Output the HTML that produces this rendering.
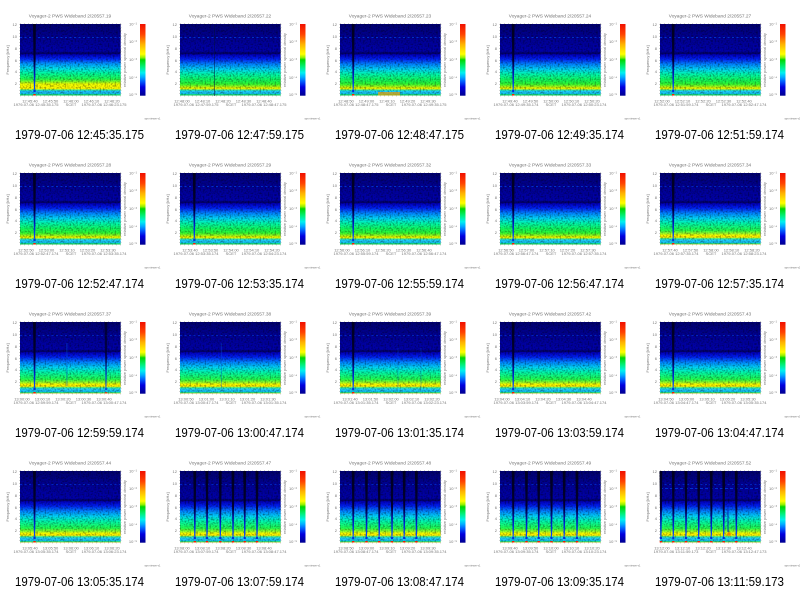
<!DOCTYPE html>
<html><head><meta charset="utf-8"><title>Voyager-2 PWS Wideband</title>
<style>
html,body{margin:0;padding:0;background:#fff;width:800px;height:596px;overflow:hidden}
svg{display:block}
text{font-family:"Liberation Sans",sans-serif}
.h{font-size:4.8px;fill:#777;text-anchor:middle}
.t{font-size:4px;fill:#777;text-anchor:middle}
.b{font-size:13px;fill:#000}
</style></head><body>
<svg width="800" height="596" viewBox="0 0 800 596" xmlns="http://www.w3.org/2000/svg">
<defs>
<filter id="n" x="0" y="0" width="100%" height="100%"><feTurbulence type="fractalNoise" baseFrequency="0.6" numOctaves="1" seed="4"/><feColorMatrix values="0 0 0 0 0  0 0 0 0 0  0 0 0 0 0  1.2 0 0 0 -0.52"/></filter>
<linearGradient id="A" x1="0" y1="0" x2="0" y2="1"><stop offset="0" stop-color="#000070"/><stop offset=".16" stop-color="#000090"/><stop offset=".38" stop-color="#0000a8"/><stop offset=".41" stop-color="#000060"/><stop offset=".43" stop-color="#0000c0"/><stop offset=".49" stop-color="#0020f0"/><stop offset=".56" stop-color="#0080ff"/><stop offset=".63" stop-color="#00d0f8"/><stop offset=".7" stop-color="#00f8b0"/><stop offset=".78" stop-color="#10f860"/><stop offset=".84" stop-color="#30f830"/><stop offset=".87" stop-color="#90f820"/><stop offset=".89" stop-color="#d8f800"/><stop offset=".905" stop-color="#f0f800"/><stop offset=".925" stop-color="#30f0a0"/><stop offset=".94" stop-color="#20d0ff"/><stop offset=".975" stop-color="#10c0f0"/><stop offset=".985" stop-color="#10e080"/><stop offset="1" stop-color="#10d050"/></linearGradient>
<linearGradient id="B" x1="0" y1="0" x2="0" y2="1"><stop offset="0" stop-color="#000070"/><stop offset=".16" stop-color="#000090"/><stop offset=".38" stop-color="#0000a8"/><stop offset=".41" stop-color="#000060"/><stop offset=".43" stop-color="#0000c0"/><stop offset=".49" stop-color="#0028f8"/><stop offset=".55" stop-color="#0090ff"/><stop offset=".62" stop-color="#00e0f0"/><stop offset=".69" stop-color="#00fca0"/><stop offset=".77" stop-color="#20fc50"/><stop offset=".81" stop-color="#90fc20"/><stop offset=".84" stop-color="#f0fc00"/><stop offset=".905" stop-color="#fff800"/><stop offset=".925" stop-color="#30f0a0"/><stop offset=".94" stop-color="#20c0ff"/><stop offset=".975" stop-color="#10c0f0"/><stop offset=".985" stop-color="#10e080"/><stop offset="1" stop-color="#10d050"/></linearGradient>
<linearGradient id="C" x1="0" y1="0" x2="0" y2="1"><stop offset="0" stop-color="#000070"/><stop offset=".16" stop-color="#000090"/><stop offset=".38" stop-color="#0000a8"/><stop offset=".41" stop-color="#000060"/><stop offset=".43" stop-color="#0000c0"/><stop offset=".49" stop-color="#0020f0"/><stop offset=".56" stop-color="#0080ff"/><stop offset=".63" stop-color="#00d0f8"/><stop offset=".7" stop-color="#00f8b0"/><stop offset=".8" stop-color="#20fc50"/><stop offset=".85" stop-color="#a8fc20"/><stop offset=".87" stop-color="#f8fc00"/><stop offset=".9" stop-color="#fff000"/><stop offset=".92" stop-color="#30f0a0"/><stop offset=".94" stop-color="#20d0ff"/><stop offset=".975" stop-color="#10c0f0"/><stop offset=".985" stop-color="#10e080"/><stop offset="1" stop-color="#d8d020"/></linearGradient>
<linearGradient id="lg" x1="0" y1="0" x2="0" y2="1"><stop offset="0" stop-color="#000020"/><stop offset=".55" stop-color="#000030"/><stop offset=".72" stop-color="#0010b0"/><stop offset=".9" stop-color="#0040f0"/><stop offset="1" stop-color="#0050ff"/></linearGradient>
<linearGradient id="cb" x1="0" y1="0" x2="0" y2="1"><stop offset="0" stop-color="#f01000"/><stop offset=".14" stop-color="#ff4000"/><stop offset=".2" stop-color="#ff7000"/><stop offset=".28" stop-color="#ffb000"/><stop offset=".36" stop-color="#ffe000"/><stop offset=".42" stop-color="#ffff00"/><stop offset=".47" stop-color="#90f000"/><stop offset=".5" stop-color="#00d800"/><stop offset=".6" stop-color="#00f080"/><stop offset=".68" stop-color="#00f0f0"/><stop offset=".74" stop-color="#00b0ff"/><stop offset=".8" stop-color="#0060ff"/><stop offset=".88" stop-color="#0000e0"/><stop offset="1" stop-color="#000090"/></linearGradient>
<g id="noise"><rect x="0" y="0" width="100.7" height="71.5" filter="url(#n)"/></g>
<g id="pA"><rect width="100.7" height="71.5" fill="url(#A)"/><use href="#noise"/><path d="M0 13.5H100.7" stroke="#0040e0" stroke-width=".8" stroke-dasharray="2 2.5"/></g>
<g id="pB"><rect width="100.7" height="71.5" fill="url(#B)"/><use href="#noise"/><path d="M0 13.5H100.7" stroke="#0040e0" stroke-width=".8" stroke-dasharray="2 2.5"/></g>
<g id="pC"><rect width="100.7" height="71.5" fill="url(#C)"/><use href="#noise"/><path d="M0 13.5H100.7" stroke="#0030d0" stroke-width=".8" stroke-dasharray="2 2.5"/></g>
<g id="L"><path d="M-1.5 0H1.4L1 38L.7 62L.3 67H-.6L-.9 38Z" fill="url(#lg)"/><rect x="-1.1" y="66" width="2.2" height="2" fill="#0030e0"/><rect x="-1.2" y="70" width="2.4" height="1.5" fill="#f02000"/></g>
<g id="f"><path d="M20 23.5H121M20 96H121" stroke="#aaa" stroke-width=".7" stroke-dasharray=".7 3.3"/><path d="M19.5 24V96M121 24V96" stroke="#aaa" stroke-width=".7" stroke-dasharray=".7 2.3"/>
<rect x="140" y="24" width="5.5" height="71.7" fill="url(#cb)"/>
<text class="t" style="text-anchor:end" x="17" y="26">12</text><text class="t" style="text-anchor:end" x="17" y="38">10</text><text class="t" style="text-anchor:end" x="17" y="50">8</text><text class="t" style="text-anchor:end" x="17" y="62">6</text><text class="t" style="text-anchor:end" x="17" y="73">4</text><text class="t" style="text-anchor:end" x="17" y="85">2</text>
<text class="t" transform="translate(9 60) rotate(-90)">Frequency [kHz]</text>
<text class="t" transform="translate(126 60) rotate(-90)">relative power spectral density</text>
<text class="t" x="133" y="25.5">10⁻¹</text><text class="t" x="133" y="43">10⁻²</text><text class="t" x="133" y="61">10⁻³</text><text class="t" x="133" y="79">10⁻⁴</text><text class="t" x="133" y="96">10⁻⁵</text>
<text x="152.5" y="119.5" style="font-size:2.6px;fill:#777;text-anchor:middle">sps-viewer-v1</text></g>
</defs>
<rect width="800" height="596" fill="#fff"/>

<g>
<use href="#pB" x="20" y="24"/><use href="#L" x="34.5" y="24"/><use href="#f"/>
<text class="h" x="70" y="17.5">Voyager-2 PWS Wideband 2/20557.19</text>
<text class="t" y="102.3"><tspan x="30">12:45:40</tspan><tspan x="50.5">12:45:50</tspan><tspan x="71">12:46:00</tspan><tspan x="91.5">12:46:10</tspan><tspan x="112">12:46:20</tspan></text>
<text class="t" y="106"><tspan x="36">1979-07-06 12:45:35.175</tspan><tspan x="71">SCET</tspan><tspan x="104">1979-07-06 12:46:23.175</tspan></text>
<text class="b" x="15" y="139" textLength="129" lengthAdjust="spacingAndGlyphs">1979-07-06 12:45:35.175</text>
</g>
<g transform="translate(160 0)">
<use href="#pA" x="20" y="24"/><path d="M54.7 24V96" stroke="#001040" stroke-width=".5"/><use href="#f"/>
<text class="h" x="70" y="17.5">Voyager-2 PWS Wideband 2/20557.22</text>
<text class="t" y="102.3"><tspan x="22">12:48:00</tspan><tspan x="42.5">12:48:10</tspan><tspan x="63">12:48:20</tspan><tspan x="83.5">12:48:30</tspan><tspan x="104">12:48:40</tspan></text>
<text class="t" y="106"><tspan x="36">1979-07-06 12:47:59.175</tspan><tspan x="71">SCET</tspan><tspan x="104">1979-07-06 12:48:47.175</tspan></text>
<text class="b" x="15" y="139" textLength="129" lengthAdjust="spacingAndGlyphs">1979-07-06 12:47:59.175</text>
</g>
<g transform="translate(320 0)">
<use href="#pA" x="20" y="24"/><use href="#L" x="33.2" y="24"/><rect x="58" y="92" width="22" height="3.5" fill="#f0a000" opacity=".7"/><use href="#f"/>
<text class="h" x="70" y="17.5">Voyager-2 PWS Wideband 2/20557.23</text>
<text class="t" y="102.3"><tspan x="26">12:48:50</tspan><tspan x="46.5">12:49:00</tspan><tspan x="67">12:49:10</tspan><tspan x="87.5">12:49:20</tspan><tspan x="108">12:49:30</tspan></text>
<text class="t" y="106"><tspan x="36">1979-07-06 12:48:47.175</tspan><tspan x="71">SCET</tspan><tspan x="104">1979-07-06 12:49:35.175</tspan></text>
<text class="b" x="15" y="139" textLength="129" lengthAdjust="spacingAndGlyphs">1979-07-06 12:48:47.175</text>
</g>
<g transform="translate(480 0)">
<use href="#pA" x="20" y="24"/><use href="#L" x="33.2" y="24"/><use href="#f"/>
<text class="h" x="70" y="17.5">Voyager-2 PWS Wideband 2/20557.24</text>
<text class="t" y="102.3"><tspan x="30">12:49:40</tspan><tspan x="50.5">12:49:50</tspan><tspan x="71">12:50:00</tspan><tspan x="91.5">12:50:10</tspan><tspan x="112">12:50:20</tspan></text>
<text class="t" y="106"><tspan x="36">1979-07-06 12:49:35.174</tspan><tspan x="71">SCET</tspan><tspan x="104">1979-07-06 12:50:23.174</tspan></text>
<text class="b" x="15" y="139" textLength="129" lengthAdjust="spacingAndGlyphs">1979-07-06 12:49:35.174</text>
</g>
<g transform="translate(640 0)">
<use href="#pA" x="20" y="24"/><use href="#L" x="33.2" y="24"/><use href="#f"/>
<text class="h" x="70" y="17.5">Voyager-2 PWS Wideband 2/20557.27</text>
<text class="t" y="102.3"><tspan x="22">12:52:00</tspan><tspan x="42.5">12:52:10</tspan><tspan x="63">12:52:20</tspan><tspan x="83.5">12:52:30</tspan><tspan x="104">12:52:40</tspan></text>
<text class="t" y="106"><tspan x="36">1979-07-06 12:51:59.174</tspan><tspan x="71">SCET</tspan><tspan x="104">1979-07-06 12:52:47.174</tspan></text>
<text class="b" x="15" y="139" textLength="129" lengthAdjust="spacingAndGlyphs">1979-07-06 12:51:59.174</text>
</g>

<g transform="translate(0 149)">
<use href="#pA" x="20" y="24"/><use href="#L" x="34.5" y="24"/><use href="#f"/>
<text class="h" x="70" y="17.5">Voyager-2 PWS Wideband 2/20557.28</text>
<text class="t" y="102.3"><tspan x="26">12:52:50</tspan><tspan x="46.5">12:53:00</tspan><tspan x="67">12:53:10</tspan><tspan x="87.5">12:53:20</tspan><tspan x="108">12:53:30</tspan></text>
<text class="t" y="106"><tspan x="36">1979-07-06 12:52:47.174</tspan><tspan x="71">SCET</tspan><tspan x="104">1979-07-06 12:53:35.174</tspan></text>
<text class="b" x="15" y="139" textLength="129" lengthAdjust="spacingAndGlyphs">1979-07-06 12:52:47.174</text>
</g>
<g transform="translate(160 149)">
<use href="#pA" x="20" y="24"/><use href="#L" x="34.3" y="24"/><use href="#f"/>
<text class="h" x="70" y="17.5">Voyager-2 PWS Wideband 2/20557.29</text>
<text class="t" y="102.3"><tspan x="30">12:53:40</tspan><tspan x="50.5">12:53:50</tspan><tspan x="71">12:54:00</tspan><tspan x="91.5">12:54:10</tspan><tspan x="112">12:54:20</tspan></text>
<text class="t" y="106"><tspan x="36">1979-07-06 12:53:35.174</tspan><tspan x="71">SCET</tspan><tspan x="104">1979-07-06 12:54:23.174</tspan></text>
<text class="b" x="15" y="139" textLength="129" lengthAdjust="spacingAndGlyphs">1979-07-06 12:53:35.174</text>
</g>
<g transform="translate(320 149)">
<use href="#pA" x="20" y="24"/><use href="#L" x="33.2" y="24"/><use href="#f"/>
<text class="h" x="70" y="17.5">Voyager-2 PWS Wideband 2/20557.32</text>
<text class="t" y="102.3"><tspan x="22">12:56:00</tspan><tspan x="42.5">12:56:10</tspan><tspan x="63">12:56:20</tspan><tspan x="83.5">12:56:30</tspan><tspan x="104">12:56:40</tspan></text>
<text class="t" y="106"><tspan x="36">1979-07-06 12:55:59.174</tspan><tspan x="71">SCET</tspan><tspan x="104">1979-07-06 12:56:47.174</tspan></text>
<text class="b" x="15" y="139" textLength="129" lengthAdjust="spacingAndGlyphs">1979-07-06 12:55:59.174</text>
</g>
<g transform="translate(480 149)">
<use href="#pA" x="20" y="24"/><use href="#L" x="33.2" y="24"/><use href="#f"/>
<text class="h" x="70" y="17.5">Voyager-2 PWS Wideband 2/20557.33</text>
<text class="t" y="102.3"><tspan x="26">12:56:50</tspan><tspan x="46.5">12:57:00</tspan><tspan x="67">12:57:10</tspan><tspan x="87.5">12:57:20</tspan><tspan x="108">12:57:30</tspan></text>
<text class="t" y="106"><tspan x="36">1979-07-06 12:56:47.174</tspan><tspan x="71">SCET</tspan><tspan x="104">1979-07-06 12:57:35.174</tspan></text>
<text class="b" x="15" y="139" textLength="129" lengthAdjust="spacingAndGlyphs">1979-07-06 12:56:47.174</text>
</g>
<g transform="translate(640 149)">
<use href="#pC" x="20" y="24"/><use href="#L" x="33.2" y="24"/><use href="#f"/>
<text class="h" x="70" y="17.5">Voyager-2 PWS Wideband 2/20557.34</text>
<text class="t" y="102.3"><tspan x="30">12:57:40</tspan><tspan x="50.5">12:57:50</tspan><tspan x="71">12:58:00</tspan><tspan x="91.5">12:58:10</tspan><tspan x="112">12:58:20</tspan></text>
<text class="t" y="106"><tspan x="36">1979-07-06 12:57:35.174</tspan><tspan x="71">SCET</tspan><tspan x="104">1979-07-06 12:58:23.174</tspan></text>
<text class="b" x="15" y="139" textLength="129" lengthAdjust="spacingAndGlyphs">1979-07-06 12:57:35.174</text>
</g>

<g transform="translate(0 298)">
<use href="#pC" x="20" y="24"/><use href="#L" x="34.5" y="24"/><use href="#L" x="106" y="24" opacity=".75"/><path d="M66.9 45V88" stroke="#0050d0" stroke-width="1" opacity=".5"/><use href="#f"/>
<text class="h" x="70" y="17.5">Voyager-2 PWS Wideband 2/20557.37</text>
<text class="t" y="102.3"><tspan x="22">13:00:00</tspan><tspan x="42.5">13:00:10</tspan><tspan x="63">13:00:20</tspan><tspan x="83.5">13:00:30</tspan><tspan x="104">13:00:40</tspan></text>
<text class="t" y="106"><tspan x="36">1979-07-06 12:59:59.174</tspan><tspan x="71">SCET</tspan><tspan x="104">1979-07-06 13:00:47.174</tspan></text>
<text class="b" x="15" y="139" textLength="129" lengthAdjust="spacingAndGlyphs">1979-07-06 12:59:59.174</text>
</g>
<g transform="translate(160 298)">
<use href="#pC" x="20" y="24"/><path d="M61.3 45V90" stroke="#0050d0" stroke-width=".8" opacity=".5"/><use href="#f"/>
<text class="h" x="70" y="17.5">Voyager-2 PWS Wideband 2/20557.38</text>
<text class="t" y="102.3"><tspan x="26">13:00:50</tspan><tspan x="46.5">13:01:00</tspan><tspan x="67">13:01:10</tspan><tspan x="87.5">13:01:20</tspan><tspan x="108">13:01:30</tspan></text>
<text class="t" y="106"><tspan x="36">1979-07-06 13:00:47.174</tspan><tspan x="71">SCET</tspan><tspan x="104">1979-07-06 13:01:35.174</tspan></text>
<text class="b" x="15" y="139" textLength="129" lengthAdjust="spacingAndGlyphs">1979-07-06 13:00:47.174</text>
</g>
<g transform="translate(320 298)">
<use href="#pC" x="20" y="24"/><use href="#L" x="33.2" y="24"/><path d="M78 50V90M101 50V90" stroke="#0050d0" stroke-width=".8" opacity=".4"/><use href="#f"/>
<text class="h" x="70" y="17.5">Voyager-2 PWS Wideband 2/20557.39</text>
<text class="t" y="102.3"><tspan x="30">13:01:40</tspan><tspan x="50.5">13:01:50</tspan><tspan x="71">13:02:00</tspan><tspan x="91.5">13:02:10</tspan><tspan x="112">13:02:20</tspan></text>
<text class="t" y="106"><tspan x="36">1979-07-06 13:01:35.174</tspan><tspan x="71">SCET</tspan><tspan x="104">1979-07-06 13:02:23.174</tspan></text>
<text class="b" x="15" y="139" textLength="129" lengthAdjust="spacingAndGlyphs">1979-07-06 13:01:35.174</text>
</g>
<g transform="translate(480 298)">
<use href="#pC" x="20" y="24"/><use href="#L" x="33.2" y="24"/><use href="#f"/>
<text class="h" x="70" y="17.5">Voyager-2 PWS Wideband 2/20557.42</text>
<text class="t" y="102.3"><tspan x="22">13:04:00</tspan><tspan x="42.5">13:04:10</tspan><tspan x="63">13:04:20</tspan><tspan x="83.5">13:04:30</tspan><tspan x="104">13:04:40</tspan></text>
<text class="t" y="106"><tspan x="36">1979-07-06 13:03:59.174</tspan><tspan x="71">SCET</tspan><tspan x="104">1979-07-06 13:04:47.174</tspan></text>
<text class="b" x="15" y="139" textLength="129" lengthAdjust="spacingAndGlyphs">1979-07-06 13:03:59.174</text>
</g>
<g transform="translate(640 298)">
<use href="#pC" x="20" y="24"/><use href="#L" x="33.2" y="24"/><use href="#f"/>
<text class="h" x="70" y="17.5">Voyager-2 PWS Wideband 2/20557.43</text>
<text class="t" y="102.3"><tspan x="26">13:04:50</tspan><tspan x="46.5">13:05:00</tspan><tspan x="67">13:05:10</tspan><tspan x="87.5">13:05:20</tspan><tspan x="108">13:05:30</tspan></text>
<text class="t" y="106"><tspan x="36">1979-07-06 13:04:47.174</tspan><tspan x="71">SCET</tspan><tspan x="104">1979-07-06 13:05:35.174</tspan></text>
<text class="b" x="15" y="139" textLength="129" lengthAdjust="spacingAndGlyphs">1979-07-06 13:04:47.174</text>
</g>

<g transform="translate(0 447)">
<use href="#pC" x="20" y="24"/><use href="#L" x="34.5" y="24"/><use href="#f"/>
<text class="h" x="70" y="17.5">Voyager-2 PWS Wideband 2/20557.44</text>
<text class="t" y="102.3"><tspan x="30">13:05:40</tspan><tspan x="50.5">13:05:50</tspan><tspan x="71">13:06:00</tspan><tspan x="91.5">13:06:10</tspan><tspan x="112">13:06:20</tspan></text>
<text class="t" y="106"><tspan x="36">1979-07-06 13:05:35.174</tspan><tspan x="71">SCET</tspan><tspan x="104">1979-07-06 13:06:23.174</tspan></text>
<text class="b" x="15" y="139" textLength="129" lengthAdjust="spacingAndGlyphs">1979-07-06 13:05:35.174</text>
</g>
<g transform="translate(160 447)">
<use href="#pC" x="20" y="24"/><use href="#L" x="34.8" y="24"/><use href="#L" x="47" y="24"/><use href="#L" x="60.3" y="24"/><use href="#L" x="73" y="24"/><use href="#L" x="84.7" y="24"/><use href="#L" x="97" y="24"/><use href="#f"/>
<text class="h" x="70" y="17.5">Voyager-2 PWS Wideband 2/20557.47</text>
<text class="t" y="102.3"><tspan x="22">13:08:00</tspan><tspan x="42.5">13:08:10</tspan><tspan x="63">13:08:20</tspan><tspan x="83.5">13:08:30</tspan><tspan x="104">13:08:40</tspan></text>
<text class="t" y="106"><tspan x="36">1979-07-06 13:07:59.174</tspan><tspan x="71">SCET</tspan><tspan x="104">1979-07-06 13:08:47.174</tspan></text>
<text class="b" x="15" y="139" textLength="129" lengthAdjust="spacingAndGlyphs">1979-07-06 13:07:59.174</text>
</g>
<g transform="translate(320 447)">
<use href="#pC" x="20" y="24"/><use href="#L" x="33.2" y="24"/><use href="#L" x="46.5" y="24"/><use href="#L" x="59.2" y="24"/><use href="#L" x="72" y="24"/><use href="#L" x="84.2" y="24"/><use href="#L" x="96.4" y="24"/><use href="#f"/>
<text class="h" x="70" y="17.5">Voyager-2 PWS Wideband 2/20557.48</text>
<text class="t" y="102.3"><tspan x="26">13:08:50</tspan><tspan x="46.5">13:09:00</tspan><tspan x="67">13:09:10</tspan><tspan x="87.5">13:09:20</tspan><tspan x="108">13:09:30</tspan></text>
<text class="t" y="106"><tspan x="36">1979-07-06 13:08:47.174</tspan><tspan x="71">SCET</tspan><tspan x="104">1979-07-06 13:09:35.174</tspan></text>
<text class="b" x="15" y="139" textLength="129" lengthAdjust="spacingAndGlyphs">1979-07-06 13:08:47.174</text>
</g>
<g transform="translate(480 447)">
<use href="#pC" x="20" y="24"/><use href="#L" x="33.2" y="24"/><use href="#L" x="46.5" y="24"/><use href="#L" x="58.7" y="24"/><use href="#L" x="71.5" y="24"/><use href="#L" x="84.2" y="24"/><use href="#L" x="97" y="24"/><use href="#f"/>
<text class="h" x="70" y="17.5">Voyager-2 PWS Wideband 2/20557.49</text>
<text class="t" y="102.3"><tspan x="30">13:09:40</tspan><tspan x="50.5">13:09:50</tspan><tspan x="71">13:10:00</tspan><tspan x="91.5">13:10:10</tspan><tspan x="112">13:10:20</tspan></text>
<text class="t" y="106"><tspan x="36">1979-07-06 13:09:35.174</tspan><tspan x="71">SCET</tspan><tspan x="104">1979-07-06 13:10:23.174</tspan></text>
<text class="b" x="15" y="139" textLength="129" lengthAdjust="spacingAndGlyphs">1979-07-06 13:09:35.174</text>
</g>
<g transform="translate(640 447)">
<use href="#pC" x="20" y="24"/><path d="M20 41.5H121" stroke="#0040e0" stroke-width=".8" stroke-dasharray="3 2"/><use href="#L" x="20.9" y="24"/><use href="#L" x="33.3" y="24"/><use href="#L" x="46" y="24"/><use href="#L" x="58.7" y="24"/><use href="#L" x="71.3" y="24"/><use href="#L" x="83.7" y="24"/><use href="#L" x="96.3" y="24"/><path d="M88 60V85" stroke="#0020c0" stroke-width="1.5" opacity=".6"/><circle cx="89" cy="87" r="1.8" fill="#f08000"/><use href="#f"/>
<text class="h" x="70" y="17.5">Voyager-2 PWS Wideband 2/20557.52</text>
<text class="t" y="102.3"><tspan x="22">13:12:00</tspan><tspan x="42.5">13:12:10</tspan><tspan x="63">13:12:20</tspan><tspan x="83.5">13:12:30</tspan><tspan x="104">13:12:40</tspan></text>
<text class="t" y="106"><tspan x="36">1979-07-06 13:11:59.173</tspan><tspan x="71">SCET</tspan><tspan x="104">1979-07-06 13:12:47.173</tspan></text>
<text class="b" x="15" y="139" textLength="129" lengthAdjust="spacingAndGlyphs">1979-07-06 13:11:59.173</text>
</g>
</svg>
</body></html>
